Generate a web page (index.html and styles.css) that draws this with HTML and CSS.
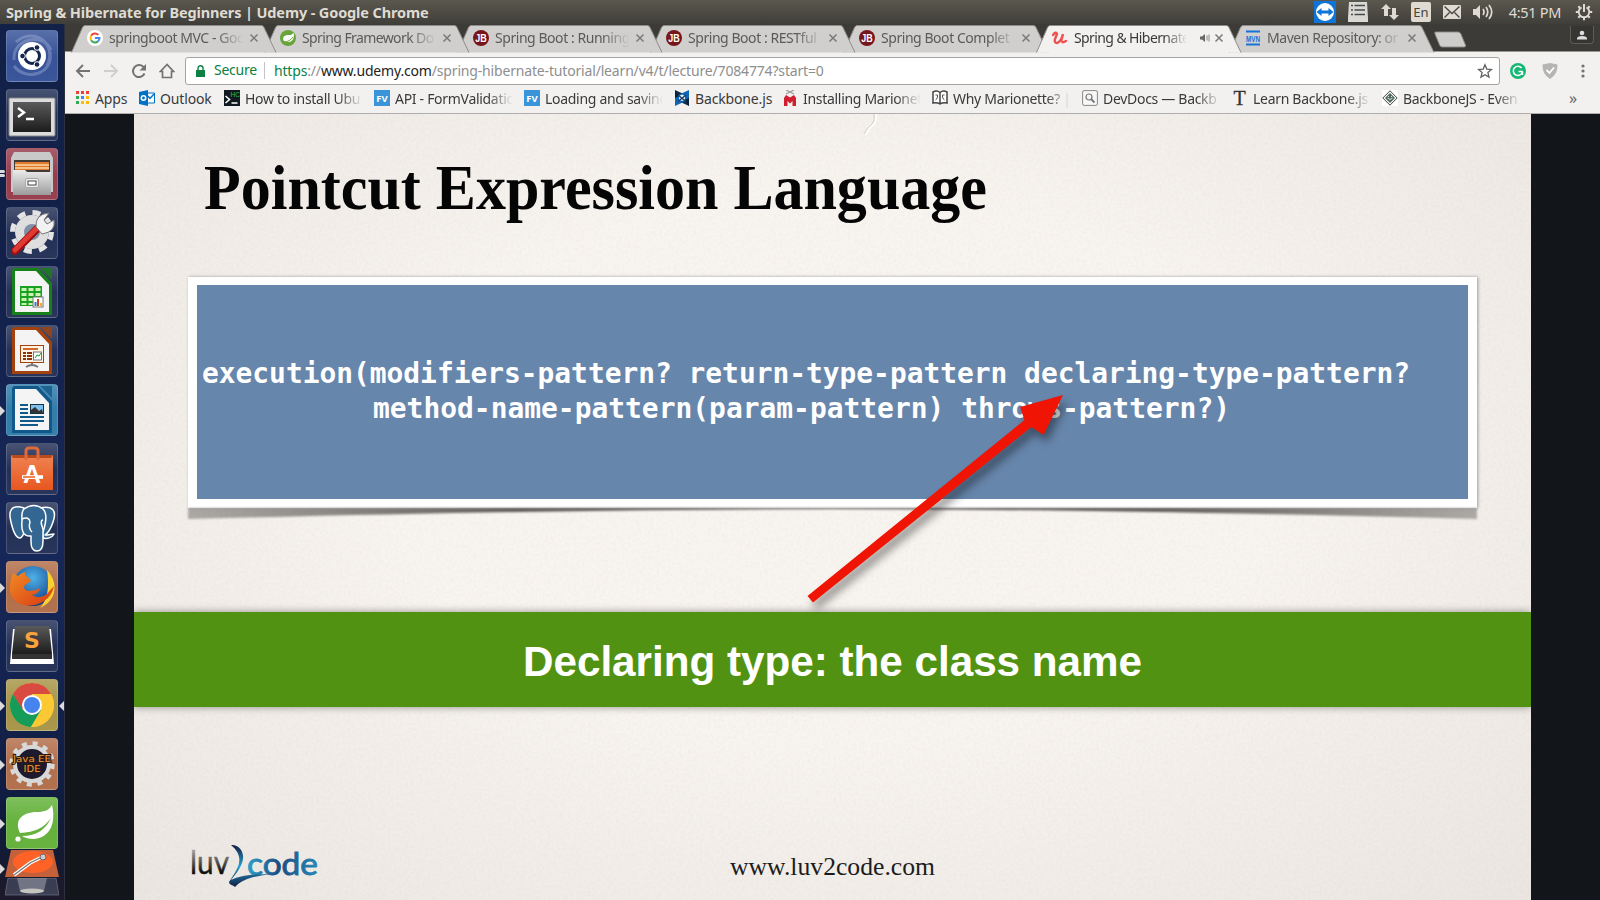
FILE: index.html
```
<!DOCTYPE html>
<html lang="en">
<head>
<meta charset="utf-8">
<title>Spring &amp; Hibernate for Beginners | Udemy</title>
<link rel="stylesheet" href="styles.css">
</head>
<body>
<svg class="defs" width="0" height="0" aria-hidden="true">
  <defs>
    <linearGradient id="metal" x1="0" y1="0" x2="0" y2="1"><stop offset="0" stop-color="#ececec"/><stop offset="1" stop-color="#9c9c9c"/></linearGradient>
    <linearGradient id="dark" x1="0" y1="0" x2="0" y2="1"><stop offset="0" stop-color="#5a5a5a"/><stop offset="1" stop-color="#1c1c1c"/></linearGradient>
    <linearGradient id="bag" x1="0" y1="0" x2="0" y2="1"><stop offset="0" stop-color="#ef8452"/><stop offset="1" stop-color="#e8561f"/></linearGradient>
    <linearGradient id="fox" x1="0" y1="0" x2="1" y2="1"><stop offset="0" stop-color="#f08a24"/><stop offset="1" stop-color="#d93a12"/></linearGradient>
    <radialGradient id="globe" cx=".5" cy=".3" r=".7"><stop offset="0" stop-color="#4db2e8"/><stop offset="1" stop-color="#123c84"/></radialGradient>
    <linearGradient id="luv" x1="0" y1="0" x2="0" y2="1"><stop offset=".2" stop-color="#a5a5a5"/><stop offset=".8" stop-color="#0c0c0c"/></linearGradient>
    <linearGradient id="code" x1="0" y1="0" x2="1" y2="0"><stop offset="0" stop-color="#2aa2cc"/><stop offset=".45" stop-color="#1c4a80"/><stop offset="1" stop-color="#2787b8"/></linearGradient>
    <linearGradient id="two" x1="0" y1="0" x2="0" y2="1"><stop offset="0" stop-color="#0e1c44"/><stop offset=".5" stop-color="#2aa0cf"/><stop offset="1" stop-color="#0e1c44"/></linearGradient>
    <linearGradient id="lift" x1="0" y1="0" x2="1" y2="0"><stop offset="0" stop-color="#3c3a38" stop-opacity=".38"/><stop offset=".25" stop-color="#3c3a38" stop-opacity=".8"/><stop offset=".75" stop-color="#3c3a38" stop-opacity=".8"/><stop offset="1" stop-color="#3c3a38" stop-opacity=".38"/></linearGradient>
    <symbol id="doc" viewBox="0 0 52 52"><path d="M9 2h23l14 15v32H6V5q0-3 3-3z"/><path d="M9 5h21l13 14v27H9z" fill="#f4f4f4"/><path d="M34 2h12v12z" opacity=".8"/></symbol>
    <symbol id="x" viewBox="0 0 10 10"><path d="M1.500 1.500l7 7M8.500 1.500l-7 7" stroke="currentColor" stroke-width="1.500"/></symbol>
    <symbol id="shape" viewBox="0 0 206 28"><path d="M.5 27.500L11.500 2.500Q12.500.5 14 .5H190.500Q192 .5 193 2.500L205 27.500" fill="currentColor" stroke="#8f8d8a"/></symbol>
    <symbol id="jb" viewBox="0 0 16 16"><circle cx="8" cy="8" r="8" fill="#76161b"/><text x="2.300" y="12" textLength="11.500" lengthAdjust="spacingAndGlyphs" font-family="Liberation Sans" font-size="10" font-weight="700" fill="#fff">JB</text></symbol>
    <symbol id="leaf" viewBox="0 0 52 52"><path d="M46 8c4 17-1 33-19 34-4 0-8-1-11-3 15 0 24-7 29-18-7 10-16 14-31 15-7-15 5-21 17-21 8 0 12-2 15-7z" fill="#fff"/><circle cx="12" cy="42" r="2.600" fill="#fff"/></symbol>
  </defs>
</svg>
<div class="desktop">
  <header class="panel">
    <span class="panel-title">Spring &amp; Hibernate for Beginners | Udemy - Google Chrome</span>
    <div class="tray">
      <svg width="22" height="22" viewBox="0 0 22 22"><rect width="22" height="22" fill="#0e74d8"/><circle cx="11" cy="11" r="9" fill="#fff"/><path d="M2.500 11l5-4v2.500h7V7l5 4-5 4v-2.500h-7V15z" fill="#0e74d8"/></svg>
      <svg width="20" height="20" viewBox="0 0 20 20"><path d="M1 0h18l1 16v4H0v-4z" fill="#d8d8d4"/><path d="M3 3.500h2m1.500 0H17M3 8h2m1.500 0H17M3 12.500h2m1.500 0H17" stroke="#4a4945" stroke-width="1.600"/></svg>
      <svg width="18" height="18" viewBox="0 0 18 18" fill="#dfdbd2"><path d="M5 1l5 5H7v7H3V6H0zM13 17l-5-5h3V5h4v7h3z"/></svg>
      <span class="kbd">En</span>
      <svg width="18" height="14" viewBox="0 0 18 14"><rect width="18" height="14" rx="1" fill="#dfdbd2"/><path d="M1.500 1.500L9 8.500l7.500-7M1.500 12.500l5-5m10 5l-5-5" stroke="#4a4945" stroke-width="1.400" fill="none"/></svg>
      <svg width="20" height="16" viewBox="0 0 20 16"><path d="M0 5h3l4-4v14l-4-4H0z" fill="#dfdbd2"/><path d="M10 5q2 3 0 6M13 3q3.500 5 0 10M16 1q5.500 7 0 14" stroke="#dfdbd2" stroke-width="1.700" fill="none"/></svg>
      <span class="clock">4:51 PM</span>
      <svg width="18" height="18" viewBox="0 0 18 18" fill="none" stroke="#dfdbd2"><path d="M6.500 4.300a5.300 5.300 0 1 0 5 0" stroke-width="1.900"/><path d="M9 1v8" stroke-width="2"/><path d="M3.300 3.300l1.700 1.700M14.700 3.300L13 5M.8 9H3m12 0h2.200M3.300 14.700L5 13m9.700 1.700L13 13M9 17.200V15" stroke-width="2"/></svg>
    </div>
  </header>
  <div class="workspace">
    <nav class="launcher">
      <div class="tile ubuntu"><svg viewBox="0 0 52 52"><path d="M8 30C6 8 38 2 45 20M44 22c4 22-24 30-36 14M10 12C28-4 52 14 41 36" fill="none" stroke="#b8c4e8" stroke-opacity=".35" stroke-width="3"/><circle cx="26" cy="26" r="14" fill="#fff"/><circle cx="26" cy="26" r="7.500" fill="none" stroke="#15264f" stroke-width="3"/><g fill="#15264f" stroke="#fff"><circle cx="16.500" cy="26" r="2.800"/><circle cx="31" cy="17.500" r="2.800"/><circle cx="31" cy="34.500" r="2.800"/></g></svg></div>
      <div class="tile slate"><svg viewBox="0 0 52 52"><rect x="3" y="9" width="46" height="38" rx="1" fill="#dcdcdc" stroke="#888"/><rect x="7" y="13" width="38" height="30" fill="url(#dark)"/><path d="M12 19l6 4.500-6 4.500M20 30h8" stroke="#fff" stroke-width="2.400" fill="none"/></svg></div>
      <div class="tile files two-run"><svg viewBox="0 0 52 52"><path d="M8 4h36l3 6v34H5V10z" fill="#c9c9c9"/><path d="M8 12h36v12H8z" fill="#423b38"/><path d="M9 14h34v8H9z" fill="#e07a2a"/><path d="M9 17h34M9 20h34" stroke="#fbd9a8" stroke-width="1.500"/><path d="M7 22h12l2 2h24v23H7z" fill="url(#metal)"/><rect x="19.500" y="30.500" width="13" height="9" rx="1.500" fill="#eee" stroke="#aaa"/><rect x="22" y="33" width="8" height="4" fill="#fff" stroke="#444"/></svg></div>
      <div class="tile slate"><svg viewBox="0 0 52 52"><circle cx="26" cy="25" r="17" fill="#dedede"/><circle cx="26" cy="25" r="19.500" fill="none" stroke="#e4e4e4" stroke-width="5" stroke-dasharray="8 7.300"/><circle cx="26" cy="25" r="8" fill="#7f8fa8"/><path d="M9 44L32 21" stroke="#a01010" stroke-width="8" stroke-linecap="round"/><path d="M9 43L31 21" stroke="#e03a34" stroke-width="5" stroke-linecap="round"/><path d="M30 20q-1-13 13-14l-5 7 3 4 7-4q2 12-12 14z" fill="#f2f2f2" stroke="#777"/></svg></div>
      <div class="tile slate"><svg viewBox="0 0 52 52"><use href="#doc" fill="#18801a"/><rect x="14" y="20" width="22" height="20" fill="#18a020"/><path d="M15.500 22h5v3h-5zm7 0h5v3h-5zm7 0h5v3h-5zm-14 5h5v3h-5zm7 0h5v3h-5zm7 0h5v3h-5zm-14 5h5v3h-5zm7 0h5v3h-5zm-7 5h5v2h-5zm7 0h5v2h-5z" fill="#c9f5b4"/><rect x="27" y="31" width="10" height="10" fill="#fff" stroke="#777"/><path d="M28.500 36h2v4h-2z" fill="#2a80c8"/><path d="M31 33h2v7h-2z" fill="#d0401c"/><path d="M34 37h2v3h-2z" fill="#f0b020"/></svg></div>
      <div class="tile slate"><svg viewBox="0 0 52 52"><use href="#doc" fill="#a3420f"/><rect x="14.500" y="20.500" width="23" height="17" fill="#fff3e6" stroke="#a3420f"/><path d="M17 24h15" stroke="#d46a25" stroke-width="2"/><path d="M17 28h3m1 0h5m-9 3h3m1 0h5m-9 3h3m1 0h5" stroke="#8a3208" stroke-width="1.800"/><rect x="27.500" y="27" width="8" height="8" fill="#fff" stroke="#777"/><path d="M29 33l2-3 2 1 2-3" stroke="#18a020" fill="none"/><path d="M26 38v2m-6 2q6-4 12 0" stroke="#777" stroke-width="2" fill="none"/></svg></div>
      <div class="tile writer run"><svg viewBox="0 0 52 52"><use href="#doc" fill="#11598a"/><path d="M14 21h8m-8 4h8m-8 4h8M14 33h24M14 37h24M14 41h18" stroke="#11598a" stroke-width="1.900"/><rect x="24.500" y="20.500" width="13" height="9" fill="#7ec0ee" stroke="#134"/><path d="M25 29v-3l4-3 4 4 3-2 1 4z" fill="#333"/></svg></div>
      <div class="tile slate"><svg viewBox="0 0 52 52"><path d="M5 12h42v35H5z" fill="url(#bag)"/><path d="M5 12h42l-2 3H7z" fill="#b84a1c"/><path d="M20 17V8q0-3 3-3h6q3 0 3 3v9" fill="none" stroke="#e06a3c" stroke-width="3"/><text x="26" y="40" text-anchor="middle" font-family="Liberation Sans" font-size="25" font-weight="700" fill="#fff">A</text><path d="M16 34h21" stroke="#fff" stroke-width="3.600"/><path d="M17 34h12" stroke="#ee6a30" stroke-width="1.600"/></svg></div>
      <div class="tile slate"><svg viewBox="0 0 52 52"><g fill="#336791" stroke="#fff" stroke-width="1.500" stroke-linejoin="round"><path d="M18 6C5 2 2 9 5 20c2 9 5 16 9 16 3-1 4-5 5-8z"/><path d="M34 6c13-3 17 3 13 14-2 6-5 11-8 13 4 0 6-1 9-1-2 4-7 5-11 4z"/><path d="M18 7c7-5 14-4 19 0 5 5 3 14 0 23v9c0 7-2 10-6 10s-6-3-6-9v-6c-8 1-10-6-9-15 0-6-1-9 2-12z"/><path d="M16 17q7-3 8 3-2 6 2 10m11-12q-3 0-1 6t1 6" fill="none"/></g></svg></div>
      <div class="tile copper run"><svg viewBox="0 0 52 52"><circle cx="27" cy="25" r="20" fill="url(#globe)"/><path d="M41 9q11 12 6 26-4 8-13 12 11-12 7-38z" fill="#fbd033"/><path d="M7 12l5 3q3-3 7-4 0 4 4 6l2 3-6 4q-3 4 3 6l8-1q2-2 4-1-2 5-8 6 8 5 15-1 4-5 7-8-2 10-10 15-10 6-20 4Q7 42 4 31q-1-9 3-19z" fill="url(#fox)"/></svg></div>
      <div class="tile slate"><svg viewBox="0 0 52 52"><path d="M7 9h38l3 35H4z" fill="#fff"/><path d="M9 6h34l3 28H6z" fill="url(#dark)"/><path d="M6 34h40v5H6z" fill="#333"/><text x="26" y="28" text-anchor="middle" font-family="DejaVu Sans" font-size="22" font-weight="700" fill="#fba23c">S</text></svg></div>
      <div class="tile chrome run active"><svg viewBox="0 0 52 52"><circle cx="26" cy="26" r="22" fill="#fcc934"/><path d="M6.900 15A22 22 0 0 1 45.100 15H26L16 31z" fill="#d94a40"/><path d="M6.900 15A22 22 0 0 0 25 48L35 31H17z" fill="#159c58"/><path d="M26 15h19.100A22 22 0 0 1 25 48L36 30z" fill="#fcc934"/><circle cx="26" cy="26" r="10" fill="#fff"/><circle cx="26" cy="26" r="8" fill="#4583ee"/></svg></div>
      <div class="tile copper run"><svg viewBox="0 0 52 52"><circle cx="26" cy="26" r="17" fill="#1d1a30" stroke="#d8d8d8" stroke-width="4"/><circle cx="26" cy="26" r="20.500" fill="none" stroke="#d8d8d8" stroke-width="4.500" stroke-dasharray="5 5.730"/><g font-family="DejaVu Sans" font-size="9.500" fill="#f29a3a" stroke="#2a1a10" stroke-width="2" paint-order="stroke" text-anchor="middle"><text x="26" y="24" textLength="38" lengthAdjust="spacingAndGlyphs">Java EE</text><text x="26" y="34" textLength="17" lengthAdjust="spacingAndGlyphs">IDE</text></g></svg></div>
      <div class="tile spring run"><svg viewBox="0 0 52 52"><use href="#leaf"/></svg></div>
      <div class="folded run"><svg viewBox="0 0 54 28"><path d="M6 0h42l6 27H0z" fill="#c4613b"/><ellipse cx="28" cy="12" rx="20" ry="11" fill="#ff6227"/><path d="M9 25l16-12 12-6" stroke="#fff" stroke-width="3.600" fill="none"/><path d="M9 25l16-12 12-6" stroke="#777" stroke-width="1.300" fill="none"/><circle cx="38" cy="7" r="3" fill="#ccc" stroke="#666"/></svg></div>
      <div class="trash"><svg viewBox="0 0 54 18"><path d="M3 0h48l3 17H0z" fill="#8790a8" fill-opacity=".3" stroke="#8790a8" stroke-opacity=".5"/><path d="M12 0h30l-3 13H15z" fill="#a9acb5" fill-opacity=".5"/><ellipse cx="27" cy="13" rx="12" ry="2.500" fill="#c4c4c0"/></svg></div>
    </nav>
    <main class="browser">
      <div class="tabs">
        <div class="tab"><svg class="shape"><use href="#shape"/></svg><svg class="fav" viewBox="0 0 16 16"><circle cx="8" cy="8" r="8" fill="#fff"/><g fill="none" stroke-width="2"><path d="M11.300 4.900A4.500 4.500 0 0 0 4.100 5.700" stroke="#ea4335"/><path d="M4.100 5.700a4.500 4.500 0 0 0 0 4.600" stroke="#fbbc05"/><path d="M4.100 10.300a4.500 4.500 0 0 0 7 1" stroke="#34a853"/><path d="M8 8h4.500q0 2-1.400 3.300" stroke="#4285f4"/></g></svg><span class="label">springboot MVC - Goo</span><svg class="close"><use href="#x"/></svg></div>
        <div class="tab"><svg class="shape"><use href="#shape"/></svg><svg class="fav" viewBox="0 0 16 16"><circle cx="8" cy="8" r="8" fill="#67a53b"/><path d="M13.500 2.500c1 5 0 9-5 9.500-2 .2-4-.5-5-1.500C2 5.500 6 5 9 5c2 0 3.500-.5 4.500-2.500z" fill="#fff"/><path d="M3 12c5 0 8-2 10-5" stroke="#67a53b" fill="none"/></svg><span class="label tight">Spring Framework Do</span><svg class="close"><use href="#x"/></svg></div>
        <div class="tab"><svg class="shape"><use href="#shape"/></svg><svg class="fav"><use href="#jb"/></svg><span class="label">Spring Boot : Running</span><svg class="close"><use href="#x"/></svg></div>
        <div class="tab"><svg class="shape"><use href="#shape"/></svg><svg class="fav"><use href="#jb"/></svg><span class="label">Spring Boot : RESTful</span><svg class="close"><use href="#x"/></svg></div>
        <div class="tab"><svg class="shape"><use href="#shape"/></svg><svg class="fav"><use href="#jb"/></svg><span class="label">Spring Boot Complet</span><svg class="close"><use href="#x"/></svg></div>
        <div class="tab current"><svg class="shape"><use href="#shape"/></svg><svg class="fav" viewBox="0 0 16 16"><path d="M1 5q3-4 4-1L3 9q-1 4 2 4 4-1 6-9L9.500 10q0 4 4.500 1" fill="none" stroke="#ee5252" stroke-width="2.400" stroke-linecap="round"/></svg><span class="label short tight">Spring &amp; Hibernate</span><svg class="audio" viewBox="0 0 10 8"><path d="M0 2.500h2L5 0v8L2 5.500H0z" fill="#666"/><path d="M7 1.500v5M9 .5v7" stroke="#888"/></svg><svg class="close"><use href="#x"/></svg></div>
        <div class="tab"><svg class="shape"><use href="#shape"/></svg><svg class="fav" viewBox="0 0 16 16"><path d="M1 1.500h14M1 14.500h14" stroke="#1673d8" stroke-width="2"/><text x="1" y="11.500" textLength="14" lengthAdjust="spacingAndGlyphs" font-family="Liberation Sans" font-size="9.500" font-weight="700" fill="#1673d8">MVN</text></svg><span class="label">Maven Repository: or</span><svg class="close"><use href="#x"/></svg></div>
        <svg class="newtab" viewBox="0 0 34 17"><path d="M1.500.5h24q2 0 3 2l5 12q.5 2-1.500 2H9q-2 0-3-2L1 2.500Q.5.500 1.500.500z" fill="#cfcdcb" stroke="#8a8886"/></svg>
        <div class="profile"><svg viewBox="0 0 10 10" width="10" height="10"><circle cx="5" cy="3" r="2.300" fill="#ddd"/><path d="M0 9.500V8q1-2 5-2t5 2v1.500z" fill="#ddd"/></svg></div>
      </div>
      <div class="toolbar">
        <svg class="tool" viewBox="0 0 16 16"><path d="M15 8H2.500M8 2L2 8l6 6" stroke="#757371" stroke-width="1.900" fill="none"/></svg>
        <svg class="tool" viewBox="0 0 16 16"><path d="M1 8h12.500M8 2l6 6-6 6" stroke="#d0cecc" stroke-width="1.900" fill="none"/></svg>
        <svg class="tool" viewBox="0 0 16 16"><path d="M13.500 10.500A6 6 0 1 1 12 3.600L14 5.500" stroke="#757371" stroke-width="2" fill="none"/><path d="M15 1v6.500H8.500z" fill="#757371"/></svg>
        <svg class="tool" viewBox="0 0 16 16"><path d="M8 1.500L1.500 8.500h2V14.500h9v-6h2z" stroke="#757371" stroke-width="1.700" fill="none"/></svg>
        <div class="omnibox">
          <svg width="9" height="12" viewBox="0 0 9 12"><path d="M0 5h9v7H0z" fill="#0b8043"/><path d="M2 5V3.300a2.500 2.500 0 0 1 5 0V5" stroke="#0b8043" stroke-width="1.400" fill="none"/></svg>
          <span class="secure">Secure</span>
          <span class="url"><b class="scheme">https</b>://<b class="host">www.udemy.com</b>/spring-hibernate-tutorial/learn/v4/t/lecture/7084774?start=0</span>
          <svg width="16" height="16" viewBox="0 0 16 16"><path d="M8 1.800l1.800 4.300 4.700.4-3.600 3 1.100 4.600L8 11.700l-4 2.400 1.100-4.600-3.600-3 4.700-.4z" fill="none" stroke="#636160" stroke-width="1.300"/></svg>
        </div>
        <svg class="ext" viewBox="0 0 16 16"><circle cx="8" cy="8" r="8" fill="#15b874"/><path d="M11.500 5A4.600 4.600 0 1 0 12 10V8.500H8.500M12.500 8.500V12" stroke="#fff" stroke-width="1.500" fill="none"/></svg>
        <svg class="ext shield" viewBox="0 0 16 16"><path d="M8 0l7.500 1.500Q16 11 8 16 0 11 .5 1.500z" fill="#b4b4b4"/><path d="M4.500 7l3 3 4.500-5.500" stroke="#fff" stroke-width="1.800" fill="none"/></svg>
        <svg class="dots" viewBox="0 0 4 14" fill="#757371"><circle cx="2" cy="2" r="1.600"/><circle cx="2" cy="7" r="1.600"/><circle cx="2" cy="12" r="1.600"/></svg>
      </div>
      <div class="bookmarks">
        <div class="bm"><svg viewBox="0 0 16 16"><path d="M2 1h3v3H2zm5 0h3v3H7zm5 0h3v3h-3z" fill="#ea4335"/><path d="M2 6h3v3H2z" fill="#34a853"/><path d="M7 6h3v3H7z" fill="#4285f4"/><path d="M12 6h3v3h-3zm-5 5h3v3H7zm5 0h3v3h-3z" fill="#fbbc05"/><path d="M2 11h3v3H2z" fill="#34a853"/></svg><span>Apps</span></div>
        <div class="bm"><svg viewBox="0 0 16 16"><path d="M8 3h7.500v10H8z" fill="#fff" stroke="#0072c6"/><path d="M9 6l2 2.500L15 4" stroke="#0072c6" fill="none" stroke-width="1.400"/><path d="M0 2l9-2v16l-9-2z" fill="#0072c6"/><circle cx="4.500" cy="8" r="2.200" fill="none" stroke="#fff" stroke-width="1.500"/></svg><span>Outlook</span></div>
        <div class="bm"><svg viewBox="0 0 16 16"><path d="M0 0h16v16H0z" fill="#111a20"/><path d="M1.500 6l4 3.500-4 3.500M7.500 13h6" stroke="#fff" stroke-width="1.600" fill="none"/><text x="6.500" y="6.500" font-family="Liberation Sans" font-size="6.500" fill="#2ac04a">HC</text></svg><span>How to install Ubu</span></div>
        <div class="bm"><svg viewBox="0 0 16 16"><path d="M0 0h16v16H0z" fill="#3a95d8"/><text x="8" y="11.500" text-anchor="middle" font-family="Noto Sans" font-size="9.500" font-weight="700" fill="#fff">FV</text></svg><span>API - FormValidatio</span></div>
        <div class="bm"><svg viewBox="0 0 16 16"><path d="M0 0h16v16H0z" fill="#3a95d8"/><text x="8" y="11.500" text-anchor="middle" font-family="Noto Sans" font-size="9.500" font-weight="700" fill="#fff">FV</text></svg><span>Loading and saving</span></div>
        <div class="bm"><svg viewBox="0 0 16 16"><path d="M1 0l14 6.500V16L1 9.500z" fill="#0e2d4c"/><path d="M15 0L1 6.500V16l14-6.500z" fill="#1166b4"/><path d="M1 0v8l4-2zM15 16V8l-4 2z" fill="#0b2138"/><path d="M5 6l3-1.500L11 6v3.500L8 11 5 9.500z" fill="#f2f1f0"/><path d="M4 5l8 6.500M12 5L4 11.500" stroke="#11406e" stroke-width="1.500"/></svg><span>Backbone.js</span></div>
        <div class="bm"><svg viewBox="0 0 16 16"><path d="M4 0l8 4M12 0L4 4" stroke="#999" stroke-width="1.200"/><path d="M2 8l2-3 4 2.500L12 5l2 3v8h-3.500v-5L8 13.500 5.500 11v5H2z" fill="#d02030"/></svg><span>Installing Marionet</span></div>
        <div class="bm"><svg viewBox="0 0 16 16"><path d="M1 2q4-2 7 .5Q11 0 15 2v11q-4-1-7 1-3-2-7-1zM8 3v11" fill="#fff" stroke="#444" stroke-width="1.500"/><path d="M3.500 5q3-1 2 2t-2 3m9-5q-3-1-2 2t2 3" fill="none" stroke="#555"/></svg><span>Why Marionette? |</span></div>
        <div class="bm"><svg viewBox="0 0 16 16"><rect x=".6" y=".6" width="14.800" height="14.800" rx="1.500" fill="#f7f7f7" stroke="#888"/><circle cx="7" cy="7" r="3" fill="none" stroke="#777" stroke-width="1.200"/><path d="M9 9l3.500 3.500" stroke="#777" stroke-width="1.800"/></svg><span>DevDocs — Backb</span></div>
        <div class="bm"><svg viewBox="0 0 16 16"><text x="7.500" y="15" text-anchor="middle" font-family="Liberation Serif" font-size="20" fill="#333" stroke="#333" stroke-width=".3">T</text></svg><span>Learn Backbone.js</span></div>
        <div class="bm"><svg viewBox="0 0 16 16"><path d="M0 0h16v16H0z" fill="#fff"/><path d="M8 .8L15.200 8 8 15.200.8 8z" fill="#f7f7f7" stroke="#444"/><path d="M8 3l5 5-5 5-5-5z" fill="#526c60"/><path d="M5.500 8q2.500 3 5 0M6 6.500h1m2 0h1" stroke="#dce8de" fill="none"/></svg><span>BackboneJS - Even</span></div>
        <div class="more">»</div>
      </div>
      <div class="player">
        <section class="slide">
          <svg class="grain"><filter id="paper" x="0" y="0" width="100%" height="100%"><feTurbulence type="fractalNoise" baseFrequency=".35" numOctaves="3" seed="4"/><feColorMatrix values="0 0 0 0 .42  0 0 0 0 .38  0 0 0 0 .34  .5 0 0 0 -.17"/></filter><rect width="100%" height="100%" filter="url(#paper)" opacity=".28"/><path d="M742 0q1 8-3 11t-7 10" fill="none" stroke="#fff" stroke-width="1.600"/><path d="M740 0q1 8-3 11t-7 9" fill="none" stroke="#c4beb9" stroke-width=".7"/></svg>
          <svg class="heading" viewBox="0 0 1397 163"><text x="70" y="94.500" textLength="783" lengthAdjust="spacingAndGlyphs">Pointcut Expression Language</text></svg>
          <div class="card">
            <svg class="lift" viewBox="0 0 1289 18" preserveAspectRatio="none"><path d="M0 0H1289V11Q900 1 645 1T0 11z" fill="url(#lift)"/></svg>
            <div class="board">
              <svg viewBox="0 0 1271 214"><text x="5" y="97.500" textLength="1208" lengthAdjust="spacingAndGlyphs">execution(modifiers-pattern? return-type-pattern declaring-type-pattern?</text><text x="176" y="132.500" textLength="857" lengthAdjust="spacingAndGlyphs">method-name-pattern(param-pattern) throws-pattern?)</text></svg>
            </div>
          </div>
          <div class="banner"><svg viewBox="0 0 1397 95"><text x="389" y="64" textLength="619" lengthAdjust="spacingAndGlyphs">Declaring type: the class name</text></svg></div>
          <footer class="foot">
            <svg viewBox="0 0 1397 62"><g font-family="Lato"><text x="56" y="35.500" textLength="39" lengthAdjust="spacingAndGlyphs" fill="url(#luv)" stroke="url(#luv)" stroke-width=".4" font-size="32">luv</text><text x="113" y="36.500" textLength="71" lengthAdjust="spacingAndGlyphs" fill="url(#code)" stroke="url(#code)" stroke-width=".9" font-size="31">code</text></g><path d="M97 7c8-1 15 8 11 18-2 6-7 12-11 17 8-4 19-6 42-6-19 2-30 5-38 13-2-2-6-2-6-5 9-14 17-24 2-37z" fill="url(#two)"/><text class="site" x="596" y="36.500" textLength="205" lengthAdjust="spacingAndGlyphs">www.luv2code.com</text></svg>
          </footer>
          <svg class="arrow" viewBox="0 0 1397 786"><path d="M673.500 482l217-176-4.500-13 43-12-19.500 40-12-8-218.500 175.500z" fill="#f01404"/></svg>
        </section>
      </div>
    </main>
  </div>
</div>
</body>
</html>
```
FILE: styles.css
```
* { box-sizing: border-box; }
body { margin: 0; width: 1600px; height: 900px; overflow: hidden; font-family: "Noto Sans", sans-serif; font-size: 14px; color: #3a3a3a; }
svg { display: block; flex: none; }
.defs { position: absolute; }
.desktop { display: flex; flex-direction: column; height: 900px; }

.panel { flex: none; height: 24px; padding: 0 7px 1px 6px; display: flex; align-items: center; justify-content: space-between; background: linear-gradient(#5b584f, #403e39); color: #dfdbd2; }
.panel-title { font-weight: 700; font-size: 14.5px; letter-spacing: -.13px; white-space: nowrap; }
.tray { display: flex; align-items: center; gap: 12.3px; }
.kbd { width: 20px; height: 20px; border-radius: 2px; background: #dfdbd2; color: #45433e; text-align: center; line-height: 20px; font-size: 13px; }
.clock { width: 54px; margin-left: 3px; font-size: 14.5px; letter-spacing: -.3px; white-space: nowrap; }

.workspace { flex: 1; display: flex; min-height: 0; }
.launcher { flex: none; width: 65px; padding: 6px 0 0 6px; display: flex; flex-direction: column; gap: 7px; overflow: hidden; border-right: 1px solid #2b303c; background: radial-gradient(circle at 40% 60%, #16285a, transparent 60%), linear-gradient(#122148, #132049 50%, #0e1938 90%, #1c1a2a); }
.tile { position: relative; flex: none; width: 52px; height: 52px; border-radius: 4px; border: 1px solid rgba(255,255,255,.16); background-image: linear-gradient(rgba(255,255,255,.18), rgba(255,255,255,.02) 50%, rgba(255,255,255,.04)); }
.tile svg { width: 52px; height: 52px; margin: -1px; }
.ubuntu { background-color: #334f96; }
.slate { background-color: #202d54; }
.files { background-color: #94394a; }
.writer { background-color: #2e7aa8; }
.copper { background-color: #b06c47; }
.chrome { background-color: #a59345; }
.spring { background-color: #62b038; }
.run::before { content: ""; position: absolute; left: -7px; top: 21px; border: 5px solid transparent; border-left-color: #dadada; border-right: 0; }
.two-run::before, .two-run::after { content: ""; position: absolute; left: -7px; top: 21px; width: 5px; height: 3px; background: #dadada; border-radius: 0 2px 2px 0; }
.two-run::after { top: 25px; }
.active::after { content: ""; position: absolute; right: -7px; top: 21px; border: 5px solid transparent; border-right-color: #dadada; border-left: 0; }
.folded { position: relative; flex: none; width: 54px; height: 28px; margin: -6px 0 0 -1px; }
.folded.run::before { left: -5px; top: 14px; }
.folded svg { width: 54px; height: 28px; }
.trash { margin: -7px 0 0 -1px; }
.trash svg { width: 54px; height: 18px; }

.browser { flex: 1; min-width: 0; display: flex; flex-direction: column; background: #f2f1f0; }
.tabs { position: relative; z-index: 0; flex: none; height: 28px; padding: 1px 0 0 6px; display: flex; background: #3c3b37; border-bottom: 1px solid #999795; }
.tab { position: relative; flex: none; width: 206px; height: 28px; margin-right: -13px; padding: 0 0 3px 16px; display: flex; align-items: center; color: #d1cfcd; }
.tab:nth-child(1) { z-index: 7; } .tab:nth-child(2) { z-index: 6; } .tab:nth-child(3) { z-index: 5; }
.tab:nth-child(4) { z-index: 4; } .tab:nth-child(5) { z-index: 3; }
.tab.current { z-index: 9; color: #f2f1f0; }
.shape { position: absolute; left: 0; top: 0; width: 206px; height: 28px; z-index: -1; }
.fav { width: 16px; height: 16px; }
.label { flex: none; width: 140px; margin-left: 6px; white-space: nowrap; color: #5c5a58; letter-spacing: -.45px; -webkit-mask-image: linear-gradient(90deg, #000 77%, transparent 96%); mask-image: linear-gradient(90deg, #000 77%, transparent 96%); }
.label.tight { letter-spacing: -.6px; }
.label.short { width: 118px; color: #3a3a3a; }
.audio { width: 10px; height: 8px; margin-left: 8px; }
.close { width: 10px; height: 10px; margin-left: 0; color: #7c7a78; }
.audio + .close { margin-left: 4px; }
.newtab { width: 32px; height: 17px; margin: 6px 0 0 12px; }
.profile { width: 24px; height: 18px; margin: 1px 6px 0 auto; display: flex; align-items: center; justify-content: center; border: 1px solid #5f5d58; border-top: 0; border-radius: 0 0 4px 4px; background: #363531; }

.toolbar { flex: none; height: 33px; padding: 5px 0 0 10px; display: flex; align-items: center; }
.tool { width: 16px; height: 16px; margin-right: 12px; }
.omnibox { width: 1315px; height: 28px; margin-left: -2px; padding: 0 6px 1px 10px; display: flex; align-items: center; border: 1px solid #a6a4a2; border-radius: 3px; background: #fff; }
.secure { margin-left: 9px; padding-right: 8px; width: 51px; height: 17px; line-height: 16px; border-right: 1px solid #c5c5c5; color: #0b8043; letter-spacing: -.25px; }
.url { flex: 1; margin-left: 9px; color: #8e8e8e; letter-spacing: -.17px; white-space: nowrap; }
.url b { font-weight: 400; }
.url .scheme { color: #0b8043; }
.url .host { color: #222; }
.ext { width: 16px; height: 16px; margin-left: 10px; }
.shield { margin-left: 16px; }
.dots { width: 4px; height: 14px; margin-left: 23px; }

.bookmarks { flex: none; height: 29px; padding: 0 0 2px 9px; display: grid; grid-template-columns: 65px 85px 150px 150px 150px 108px 150px 150px 150px 150px 150px 1fr; align-items: center; border-bottom: 1px solid #b0aeac; }
.bm { display: flex; align-items: center; gap: 5px; }
.bm svg { width: 16px; height: 16px; }
.bm span { width: 124px; white-space: nowrap; letter-spacing: -.3px; -webkit-mask-image: linear-gradient(90deg, #000 75%, transparent 95%); mask-image: linear-gradient(90deg, #000 75%, transparent 95%); }
.bm:nth-child(-n+2) span, .bm:nth-child(6) span { width: auto; letter-spacing: -.15px; -webkit-mask-image: none; mask-image: none; }
.more { padding-left: 37px; font-size: 16px; line-height: 20px; color: #666; }

.player { flex: 1; min-height: 0; display: flex; justify-content: center; background: #12161b; }
.slide { position: relative; z-index: 0; width: 1397px; height: 786px; display: flex; flex-direction: column; background: radial-gradient(ellipse at 50% 45%, rgba(248,244,240,1) 45%, rgba(246,242,238,.7) 65%, rgba(238,234,229,0) 100%), #ebe6e1; }
.grain { position: absolute; inset: 0; width: 100%; height: 100%; z-index: -1; }
.heading { width: 1397px; height: 163px; font-family: "Liberation Serif", serif; font-weight: 700; font-size: 63px; fill: #050505; }
.card { position: relative; width: 1289px; height: 231px; margin-left: 54px; padding: 8px 9px 9px; background: #fff; box-shadow: 1px 0 3px rgba(0,0,0,.35); }
.lift { position: absolute; left: 0; top: 231px; width: 1289px; height: 18px; filter: blur(1.2px); }
.board { width: 1271px; height: 214px; background: #6786ac; }
.board svg { width: 1271px; height: 214px; font-family: "DejaVu Sans Mono", monospace; font-weight: 700; font-size: 27.5px; fill: #fff; }
.banner { height: 95px; margin-top: 104px; background: #529212; box-shadow: 0 0 8px rgba(0,0,0,.4); clip-path: inset(-14px 0); }
.banner svg { width: 1397px; height: 95px; font-family: "Liberation Sans", sans-serif; font-weight: 700; font-size: 42px; fill: #fff; }
.foot { margin-top: 131px; }
.foot svg { width: 1397px; height: 62px; }
.site { font-family: "Liberation Serif", serif; font-size: 25px; fill: #1c1c1c; }
.arrow { position: absolute; left: 0; top: 0; width: 1397px; height: 786px; filter: drop-shadow(4px 7px 4px rgba(0,0,0,.4)); }
```
